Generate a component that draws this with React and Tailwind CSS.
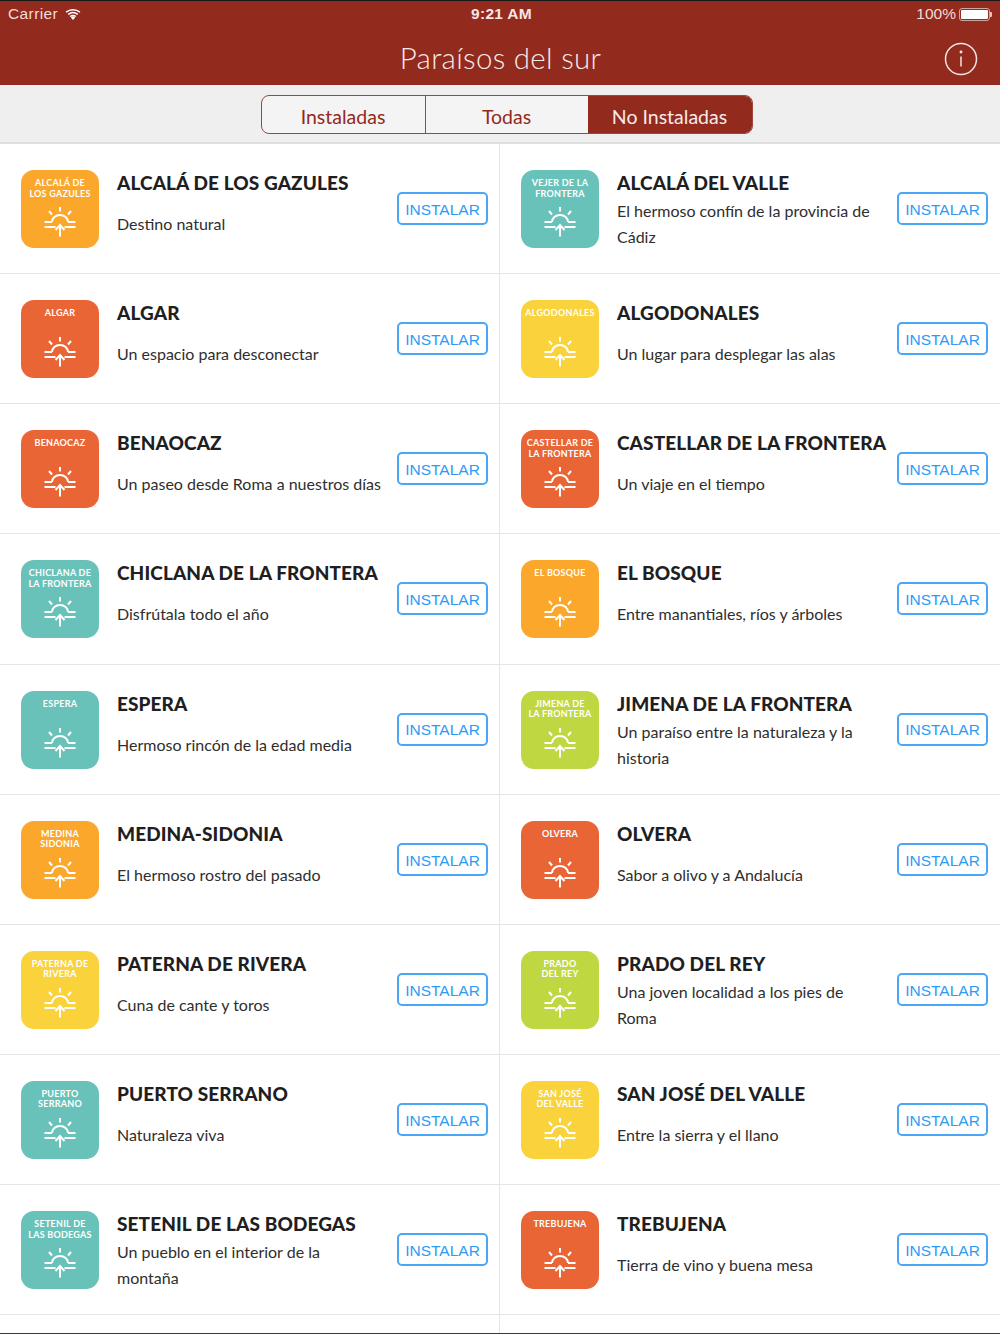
const O='#fba72b',T='#69c2b9',R='#e96535',Y='#f9d23c',G='#bfd842';
const items=[
[['ALCALÁ DE','LOS GAZULES'],O,'ALCALÁ DE LOS GAZULES',['Destino natural']],
[['VEJER DE LA','FRONTERA'],T,'ALCALÁ DEL VALLE',['El hermoso confín de la provincia de','Cádiz']],
[['ALGAR'],R,'ALGAR',['Un espacio para desconectar']],
[['ALGODONALES'],Y,'ALGODONALES',['Un lugar para desplegar las alas']],
[['BENAOCAZ'],R,'BENAOCAZ',['Un paseo desde Roma a nuestros días']],
[['CASTELLAR DE','LA FRONTERA'],R,'CASTELLAR DE LA FRONTERA',['Un viaje en el tiempo']],
[['CHICLANA DE','LA FRONTERA'],T,'CHICLANA DE LA FRONTERA',['Disfrútala todo el año']],
[['EL BOSQUE'],O,'EL BOSQUE',['Entre manantiales, ríos y árboles']],
[['ESPERA'],T,'ESPERA',['Hermoso rincón de la edad media']],
[['JIMENA DE','LA FRONTERA'],G,'JIMENA DE LA FRONTERA',['Un paraíso entre la naturaleza y la','historia']],
[['MEDINA','SIDONIA'],O,'MEDINA-SIDONIA',['El hermoso rostro del pasado']],
[['OLVERA'],R,'OLVERA',['Sabor a olivo y a Andalucía']],
[['PATERNA DE','RIVERA'],Y,'PATERNA DE RIVERA',['Cuna de cante y toros']],
[['PRADO','DEL REY'],G,'PRADO DEL REY',['Una joven localidad a los pies de','Roma']],
[['PUERTO','SERRANO'],T,'PUERTO SERRANO',['Naturaleza viva']],
[['SAN JOSÉ','DEL VALLE'],Y,'SAN JOSÉ DEL VALLE',['Entre la sierra y el llano']],
[['SETENIL DE','LAS BODEGAS'],T,'SETENIL DE LAS BODEGAS',['Un pueblo en el interior de la','montaña']],
[['TREBUJENA'],R,'TREBUJENA',['Tierra de vino y buena mesa']],
];
function Sun(){return <svg width="32" height="32" viewBox="0 0 32 32" fill="none" stroke="white" strokeWidth="2" className="block">
<path d="M16 1v4.500M5 5l3 3.500M27 5l-3 3.500"/>
<path d="M8 16a8 7 0 0 1 16 0"/>
<path d="M0.500 16h7.500M24 16h7.500M0.500 21h11M20.500 21h11"/>
<path d="M16 30.500V19M11.500 24l4.500-5 4.500 5"/>
</svg>}
function Icon({lines,color}){return <div className="w-[78px] h-[78px] rounded-[13px] shrink-0 flex flex-col items-center text-white pt-[8px]" style={{backgroundColor:color}}>
<div className="h-[22px] text-center font-bold text-[9px] leading-[10.5px] tracking-[0.25px] whitespace-nowrap">{lines.map(l=><div key={l}>{l}</div>)}</div>
<div className="mt-[6px]"><Sun/></div>
</div>}
function Row({it,i}){const [lines,color,title,sub]=it;return <div className={"h-[130.125px] border-b border-[#e5e5e5] flex items-start pl-[21px] "+(i%2==0?"border-r pr-[11px]":"pr-[12px]")}>
<div className="pt-[26px]"><Icon lines={lines} color={color}/></div>
<div className="ml-[18px] flex-1 min-w-0 pt-[26px]">
<div className="text-[19px] leading-[26px] font-black tracking-[0.1px] text-[#1f1f1f] whitespace-nowrap">{title}</div>
<div className={"text-[#2e2e2e] text-[16px] leading-[26px] whitespace-nowrap "+(sub.length==1?"mt-[15px]":"mt-[2px]")}>{sub.map(s=><div key={s}>{s}</div>)}</div>
</div>
<div className="pt-[48px] shrink-0"><button className="w-[91px] h-[33px] pt-[2px] rounded-[5px] border-2 border-[#4ba6f6] text-[#2b9bf5] text-[15.5px] font-['Liberation_Sans',sans-serif] bg-white">INSTALAR</button></div>
</div>}
export default function App(){return <div className="w-[1000px] h-[1334px] overflow-hidden bg-white font-['Lato',sans-serif] relative">
<div className="h-[85px] bg-[#922a1e] border-t border-[#1a1a1a] text-white">
<div className="h-[26px] flex items-center justify-between pl-[8px] pr-[8px] text-[15.5px] font-['Liberation_Sans',sans-serif] relative">
<div className="flex items-center gap-[7px] text-[#f2dcd9]"><span className="tracking-[0.4px]">Carrier</span>
<svg width="16" height="12" viewBox="0 0 16 12" fill="white"><path d="M8 12l2.200-2.600a3.400 3.400 0 0 0-4.400 0zM4.600 8l1 1.100a4 4 0 0 1 4.800 0l1-1.100a5.800 5.800 0 0 0-6.800 0zM2.800 5.800l1 1.200a6.800 6.800 0 0 1 8.400 0l1-1.200a8.500 8.500 0 0 0-10.400 0zM0.600 3.600l1 1.200a10 10 0 0 1 12.800 0l1-1.200a11.800 11.800 0 0 0-14.800 0z"/></svg></div>
<div className="absolute left-[3px] right-0 text-center font-bold text-[15.5px] tracking-[0.3px] text-[#f6e6e4]">9:21 AM</div>
<div className="flex items-center gap-[3px] text-[#f2dcd9]"><span>100%</span>
<div className="flex items-center"><div className="w-[31px] h-[13px] border border-[#cfa5a0] rounded-[3px] p-[1px]"><div className="w-full h-full bg-white rounded-[1px]"/></div><div className="w-[2px] h-[5px] bg-[#e4c7c4] rounded-r-[1px]"/></div></div>
</div>
<div className="relative h-[58px] flex items-center justify-center">
<span className="text-[29.5px] pt-[4px] pl-[1px] font-light tracking-[0.3px] text-[#f7ebe9]">Paraísos del sur</span>
<svg className="absolute left-[944px] top-[15px]" width="34" height="34" viewBox="0 0 34 34" fill="none" stroke="#f5e6e4" strokeWidth="1.500"><circle cx="17" cy="17" r="15.500"/><path d="M17 14.500v10"/><circle cx="17" cy="10" r="0.700" fill="#f5e6e4"/></svg>
</div>
</div>
<div className="h-[59px] bg-[#efefef] border-b-2 border-[#dedede] flex justify-center items-start pt-[10px] pl-[13px]">
<div className="flex h-[39px] w-[492px] border border-[#a1453b] rounded-[8px] overflow-hidden text-[19.5px] leading-[41px] text-center bg-[#f4f4f4]">
<div className="w-[164px] border-r border-[#a1453b] text-[#922a1e]">Instaladas</div>
<div className="w-[162px] text-[#922a1e]">Todas</div>
<div className="flex-1 bg-[#922a1e] text-[#f7ebe9]">No Instaladas</div>
</div>
</div>
<div className="grid grid-cols-2">{items.map((it,i)=><Row key={i} it={it} i={i}/>)}
<div className="h-[20px] border-r border-[#e5e5e5]"/><div/></div>
<div className="absolute left-0 right-0 bottom-0 h-[1px] bg-[#3a3a3a]"/>
</div>}
